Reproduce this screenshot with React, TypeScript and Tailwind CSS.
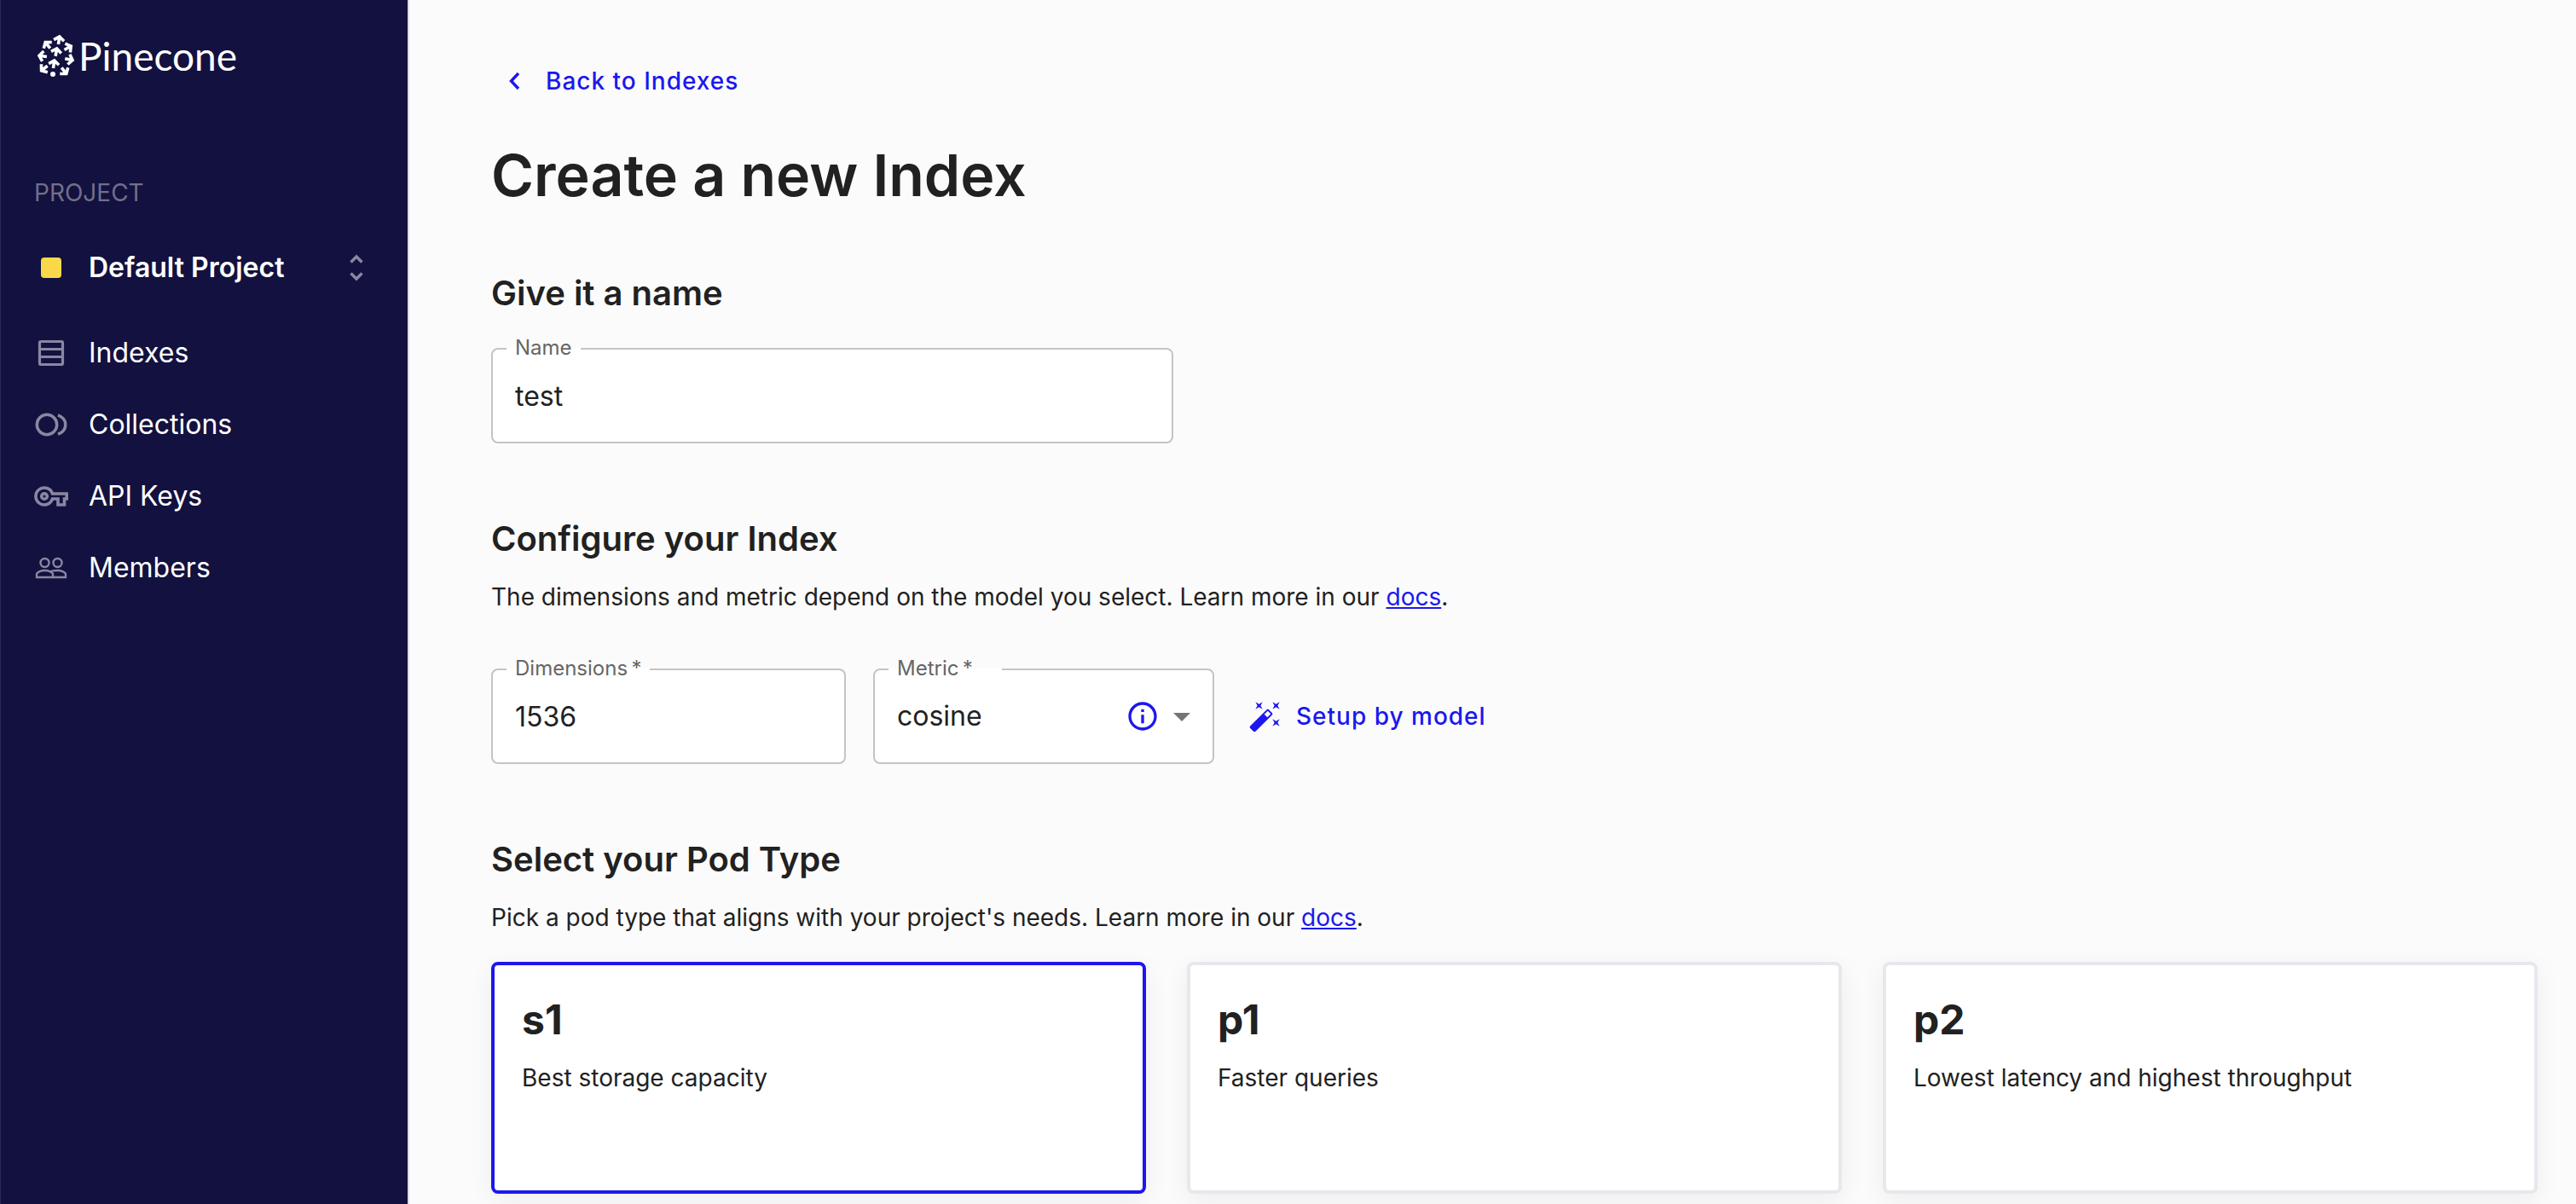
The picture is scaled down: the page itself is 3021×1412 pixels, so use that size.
import React from "react";
import {
  MdAutoFixHigh,
  MdOutlineInfo,
  MdArrowDropDown,
} from "react-icons/md";

const navItems = [
  { label: "Indexes", icon: <IndexesIcon /> },
  { label: "Collections", icon: <CollectionsIcon /> },
  { label: "API Keys", icon: <KeyIcon /> },
  { label: "Members", icon: <MembersIcon /> },
];

const pods = [
  { id: "s1", text: "Best storage capacity" },
  { id: "p1", text: "Faster queries" },
  { id: "p2", text: "Lowest latency and highest throughput" },
];

function Arrow({ x, y, angle }: { x: number; y: number; angle: number }) {
  return (
    <path
      d="M-6 6.5L0 2L6 6.5M0 2V11"
      transform={`translate(${x} ${y}) rotate(${angle})`}
    />
  );
}

function LogoMark() {
  return (
    <svg viewBox="0 0 44 50" className="h-[50px] w-11 overflow-visible" fill="none" stroke="currentColor" strokeWidth="3.6" aria-hidden="true">
      <Arrow x={26} y={0} angle={8} />
      <Arrow x={23} y={14} angle={10} />
      <Arrow x={20} y={28} angle={8} />
      <Arrow x={8} y={7} angle={-38} />
      <Arrow x={41} y={12} angle={60} />
      <Arrow x={0} y={24} angle={-82} />
      <Arrow x={43} y={30} angle={102} />
      <Arrow x={3} y={43} angle={-128} />
      <Arrow x={35} y={47} angle={142} />
      <circle cx="18" cy="46" r="3" fill="currentColor" stroke="none" />
    </svg>
  );
}

function IndexesIcon() {
  return (
    <svg viewBox="0 0 40 40" className="size-10" fill="none" stroke="currentColor" strokeWidth="3.2" aria-hidden="true">
      <rect x="6.5" y="6.5" width="27" height="27" rx="1.5" />
      <path d="M6 15.5h28M6 24.5h28" />
    </svg>
  );
}

function CollectionsIcon() {
  return (
    <svg viewBox="0 0 40 40" className="size-10" fill="none" stroke="currentColor" strokeWidth="3.5" aria-hidden="true">
      <circle cx="15" cy="20" r="11.7" />
      <path d="M28 8.800C33.500 10.800 36.800 15 36.800 20S33.500 29.200 28 31.200" />
    </svg>
  );
}

function KeyIcon() {
  return (
    <svg viewBox="0 0 40 40" className="size-10" fill="none" stroke="currentColor" strokeWidth="3.6" aria-hidden="true">
      <path d="M21.500 17H38.200V23H35.500V30H28V23H21.500A10 10 0 1 1 21.500 17Z" />
      <circle cx="12" cy="20" r="3.3" />
    </svg>
  );
}

function MembersIcon() {
  return (
    <svg viewBox="0 0 40 40" className="size-10" fill="none" stroke="currentColor" strokeWidth="2.4" aria-hidden="true">
      <circle cx="12.5" cy="14" r="5" />
      <circle cx="27.5" cy="14" r="5" />
      <path d="M3 31v-3.500c0-2.500 5-4.500 9.500-4.500s9.500 2 9.500 4.500V31Z" />
      <path d="M18 24.500c2.500-1 6-1.500 9.500-1.500 4.500 0 9.500 2 9.500 4.500V31H22" />
    </svg>
  );
}

function Field({
  id,
  label,
  className,
  children,
}: {
  id: string;
  label: React.ReactNode;
  className: string;
  children: React.ReactNode;
}) {
  return (
    <div className={`relative h-28 rounded-lg border-2 border-[#c4c4c4] bg-white ${className}`}>
      <label
        htmlFor={id}
        className="absolute -top-4 left-4 bg-linear-to-b from-[#fbfbfb] from-50% to-white to-50% px-2.5 text-2xl leading-7 text-[#666]"
      >
        {label}
      </label>
      {children}
    </div>
  );
}

function DocsLink() {
  return (
    <a href="#docs" className="text-[#1c17ee] underline">
      docs
    </a>
  );
}

export default function App() {
  return (
    <div className="flex h-screen overflow-hidden bg-[#fbfbfb] font-[Inter,sans-serif] text-[#212121]">
      <aside className="w-[480px] shrink-0 border-r-2 border-l border-r-[#dcdce6] border-l-[#2c2a55] bg-[#13113f] pr-13 pl-[39px] text-white">
        <a href="#home" className="mt-9 ml-1 flex items-center gap-1">
          <LogoMark />
          <span className="font-[Lato,sans-serif] text-[46px] leading-[60px]">Pinecone</span>
        </a>
        <h2 className="mt-28 text-[28px] leading-9 text-[#716f8b]">PROJECT</h2>
        <button type="button" className="mt-9 flex h-17 w-full items-center text-left text-[32px] font-semibold">
          <span className="mx-2 size-6 rounded bg-[#f9d849]" />
          <span className="ml-6 flex-1">Default Project</span>
          <svg viewBox="0 0 16 32" className="h-8 w-4" fill="none" stroke="#8987a1" strokeWidth="3.4" aria-hidden="true">
            <path d="M1.500 9.500L8 3L14.500 9.500M1.500 22.500L8 29L14.500 22.500" />
          </svg>
        </button>
        <nav className="mt-6 flex flex-col">
          {navItems.map((item) => (
            <a key={item.label} href={`#${item.label}`} className="flex h-21 items-center gap-6 text-[32px]">
              <span className="text-[#8987a1]">{item.icon}</span>
              {item.label}
            </a>
          ))}
        </nav>
      </aside>
      <main className="min-w-0 flex-1 pr-[45px] pl-24">
        <a href="#indexes" className="mt-[67px] ml-4 flex h-14 w-fit items-center gap-6 text-[28px] font-medium tracking-[1px] text-[#1c17ee]">
          <svg viewBox="0 0 24 24" className="size-6" fill="none" stroke="currentColor" strokeWidth="3.4" aria-hidden="true">
            <path d="M16 3L7.500 12L16 21" />
          </svg>
          Back to Indexes
        </a>
        <h1 className="mt-[38px] text-[68px] leading-[88px] font-semibold">Create a new Index</h1>
        <h2 className="mt-[65px] text-[40px] leading-[60px] font-semibold">Give it a name</h2>
        <div className="mt-[34px]">
          <Field id="name" label="Name" className="w-[800px]">
            <input id="name" defaultValue="test" className="size-full bg-transparent px-[26px] text-[32px] outline-none" />
          </Field>
        </div>
        <h2 className="mt-[82px] text-[40px] leading-[60px] font-semibold">Configure your Index</h2>
        <p className="mt-[18px] text-[28px] leading-10">
          The dimensions and metric depend on the model you select. Learn more in our <DocsLink />.
        </p>
        <div className="mt-16 flex items-center">
          <Field id="dimensions" label={<>Dimensions{"\u2009"}*</>} className="w-[416px]">
            <input id="dimensions" defaultValue="1536" className="size-full bg-transparent px-[26px] text-[32px] outline-none" />
          </Field>
          <Field id="metric" label={<span className="pr-6">Metric{"\u2009"}*</span>} className="ml-8 w-[400px]">
            <select id="metric" className="size-full appearance-none bg-transparent px-[26px] text-[32px] outline-none">
              <option>cosine</option>
            </select>
            <div className="pointer-events-none absolute inset-y-0 right-3 flex items-center">
              <MdOutlineInfo className="mr-0.5 size-10 text-[#1c17ee]" />
              <MdArrowDropDown className="size-12 text-[#757575]" />
            </div>
          </Field>
          <button type="button" className="ml-10 flex items-center gap-4 text-[28px] font-medium tracking-[1px] text-[#1c17ee]">
            <MdAutoFixHigh className="size-10" />
            Setup by model
          </button>
        </div>
        <h2 className="mt-[82px] text-[40px] leading-[60px] font-semibold">Select your Pod Type</h2>
        <p className="mt-[18px] text-[28px] leading-10">
          Pick a pod type that aligns with your project's needs. Learn more in our <DocsLink />.
        </p>
        <div className="mt-8 grid grid-cols-3 gap-12">
          {pods.map((pod, i) => (
            <button
              key={pod.id}
              type="button"
              aria-pressed={i === 0}
              className={`flex h-[272px] flex-col items-start rounded-lg border-4 bg-white px-8 pt-[34px] text-left shadow-[0_8px_30px_rgba(20,17,63,0.06)] ${
                i === 0 ? "border-[#1c17ee]" : "border-[#e7e7ec]"
              }`}
            >
              <span className="text-5xl leading-[60px] font-bold">{pod.id}</span>
              <span className="mt-[18px] text-[28px] leading-10">{pod.text}</span>
            </button>
          ))}
        </div>
      </main>
    </div>
  );
}
